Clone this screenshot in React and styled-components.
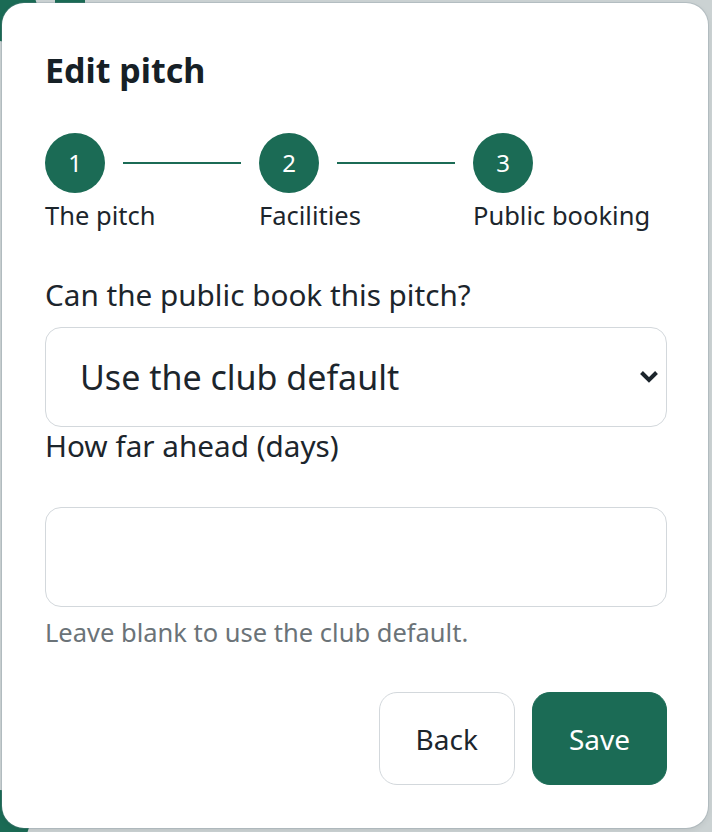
import React from 'react'
import styled, { createGlobalStyle } from 'styled-components'

const GlobalStyle = createGlobalStyle`
  * {
    box-sizing: border-box;
  }
  html, body {
    margin: 0;
    padding: 0;
    height: 100%;
  }
  body {
    font-family: "Noto Sans", "Open Sans", sans-serif;
    background-color: #cbd2d3;
    color: #1c252c;
  }
`

const steps = [
  { num: 1, label: 'The pitch' },
  { num: 2, label: 'Facilities' },
  { num: 3, label: 'Public booking' },
]

const App = () => {
  return (
    <>
      <GlobalStyle />
      <Backdrop>
        {/* page behind the overlay */}
        <PageBlob $top={-18} $left={-22} />
        <PageBlob $top={790} $left={-30} />
        <PageTab />

        <Dialog>
          <Title>Edit pitch</Title>

          {/* 단계 표시 */}
          <Stepper>
            {steps.map((step, i) => (
              <Step key={step.num} $last={i === steps.length - 1}>
                <StepTop>
                  <StepCircle>{step.num}</StepCircle>
                  {i < steps.length - 1 && <StepLine />}
                </StepTop>
                <StepLabel>{step.label}</StepLabel>
              </Step>
            ))}
          </Stepper>

          <FieldLabel htmlFor="public-book" $top={45} $gap={13}>
            Can the public book this pitch?
          </FieldLabel>
          <SelectWrap>
            <Select id="public-book" defaultValue="default">
              <option value="default">Use the club default</option>
              <option value="yes">Yes</option>
              <option value="no">No</option>
            </Select>
            <Chevron width="20" height="13" viewBox="0 0 20 13">
              <path d="M2.5 2.5 L10 10 L17.5 2.5" fill="none" stroke="#1c252c" strokeWidth="4" strokeLinejoin="miter" />
            </Chevron>
          </SelectWrap>

          <FieldLabel htmlFor="days-ahead" $top={0} $gap={42}>
            How far ahead (days)
          </FieldLabel>
          <Input id="days-ahead" type="text" />
          <Hint>Leave blank to use the club default.</Hint>

          <Actions>
            <Button>Back</Button>
            <Button $primary>Save</Button>
          </Actions>
        </Dialog>
      </Backdrop>
    </>
  )
}

export default App

// * Wrap
const Backdrop = styled.div`
  position: relative;
  min-height: 832px;
  padding: 3px 4px 4px 2px;
  overflow: hidden;
`

const PageBlob = styled.div`
  position: absolute;
  top: ${(p) => p.$top}px;
  left: ${(p) => p.$left}px;
  width: 60px;
  height: 60px;
  border-radius: 50%;
  background-color: #1b6b55;
`

const PageTab = styled.div`
  position: absolute;
  top: 0;
  left: 55px;
  width: 30px;
  height: 3px;
  background-color: #1b6b55;
`

const Dialog = styled.div`
  position: relative;
  width: 706px;
  height: 825px;
  padding: 47px 41px 0 43px;
  background-color: #ffffff;
  border-radius: 22px;
  box-shadow: 0 0 0 1px rgba(120, 140, 150, 0.25), 0 2px 6px rgba(0, 0, 0, 0.08);
`

const Title = styled.h2`
  margin: 0;
  font-size: 34px;
  line-height: 40px;
  font-weight: 700;
  color: #162026;
`

// * Stepper
const Stepper = styled.div`
  display: flex;
  margin-top: 43px;
`

const Step = styled.div`
  display: flex;
  flex-direction: column;
  width: ${(p) => (p.$last ? 'auto' : '214px')};
  flex-shrink: 0;
`

const StepTop = styled.div`
  display: flex;
  align-items: center;
  gap: 18px;
`

const StepCircle = styled.div`
  width: 60px;
  height: 60px;
  border-radius: 50%;
  background-color: #1b6b55;
  color: #ffffff;
  display: flex;
  align-items: center;
  justify-content: center;
  font-size: 24px;
  line-height: 1;
`

const StepLine = styled.div`
  width: 118px;
  height: 2px;
  background-color: #1b6b55;
`

const StepLabel = styled.div`
  margin-top: 6px;
  font-size: 25.5px;
  line-height: 32px;
  color: #1c252c;
  white-space: nowrap;
`

// * Form
const FieldLabel = styled.label`
  display: block;
  margin-top: ${(p) => p.$top}px;
  margin-bottom: ${(p) => p.$gap}px;
  font-size: 29.7px;
  line-height: 38px;
  color: #1c252c;
`

const SelectWrap = styled.div`
  position: relative;
`

const Select = styled.select`
  display: block;
  width: 100%;
  height: 100px;
  padding: 0 60px 0 34px;
  appearance: none;
  background-color: #ffffff;
  border: 1.5px solid #d3d8dc;
  border-radius: 16px;
  font-family: inherit;
  font-size: 34px;
  color: #1c252c;
  &:focus {
    outline: none;
  }
`

const Chevron = styled.svg`
  position: absolute;
  right: 8px;
  top: 43px;
  pointer-events: none;
`

const Input = styled.input`
  display: block;
  width: 100%;
  height: 100px;
  padding: 0 34px;
  border: 1.5px solid #d3d8dc;
  border-radius: 16px;
  font-family: inherit;
  font-size: 34px;
  color: #1c252c;
  &:focus {
    outline: none;
  }
`

const Hint = styled.p`
  margin: 10px 0 0 0;
  font-size: 25.5px;
  line-height: 30px;
  color: #6b7378;
`

// * Actions
const Actions = styled.div`
  display: flex;
  justify-content: flex-end;
  gap: 17px;
  margin-top: 45px;
`

const Button = styled.button`
  height: 93px;
  padding: 0 36px;
  border-radius: 18px;
  font-family: inherit;
  font-size: 28px;
  cursor: pointer;
  border: 1.5px solid ${(p) => (p.$primary ? '#1b6b55' : '#d3d8dc')};
  background-color: ${(p) => (p.$primary ? '#1b6b55' : '#ffffff')};
  color: ${(p) => (p.$primary ? '#ffffff' : '#1c252c')};
`
